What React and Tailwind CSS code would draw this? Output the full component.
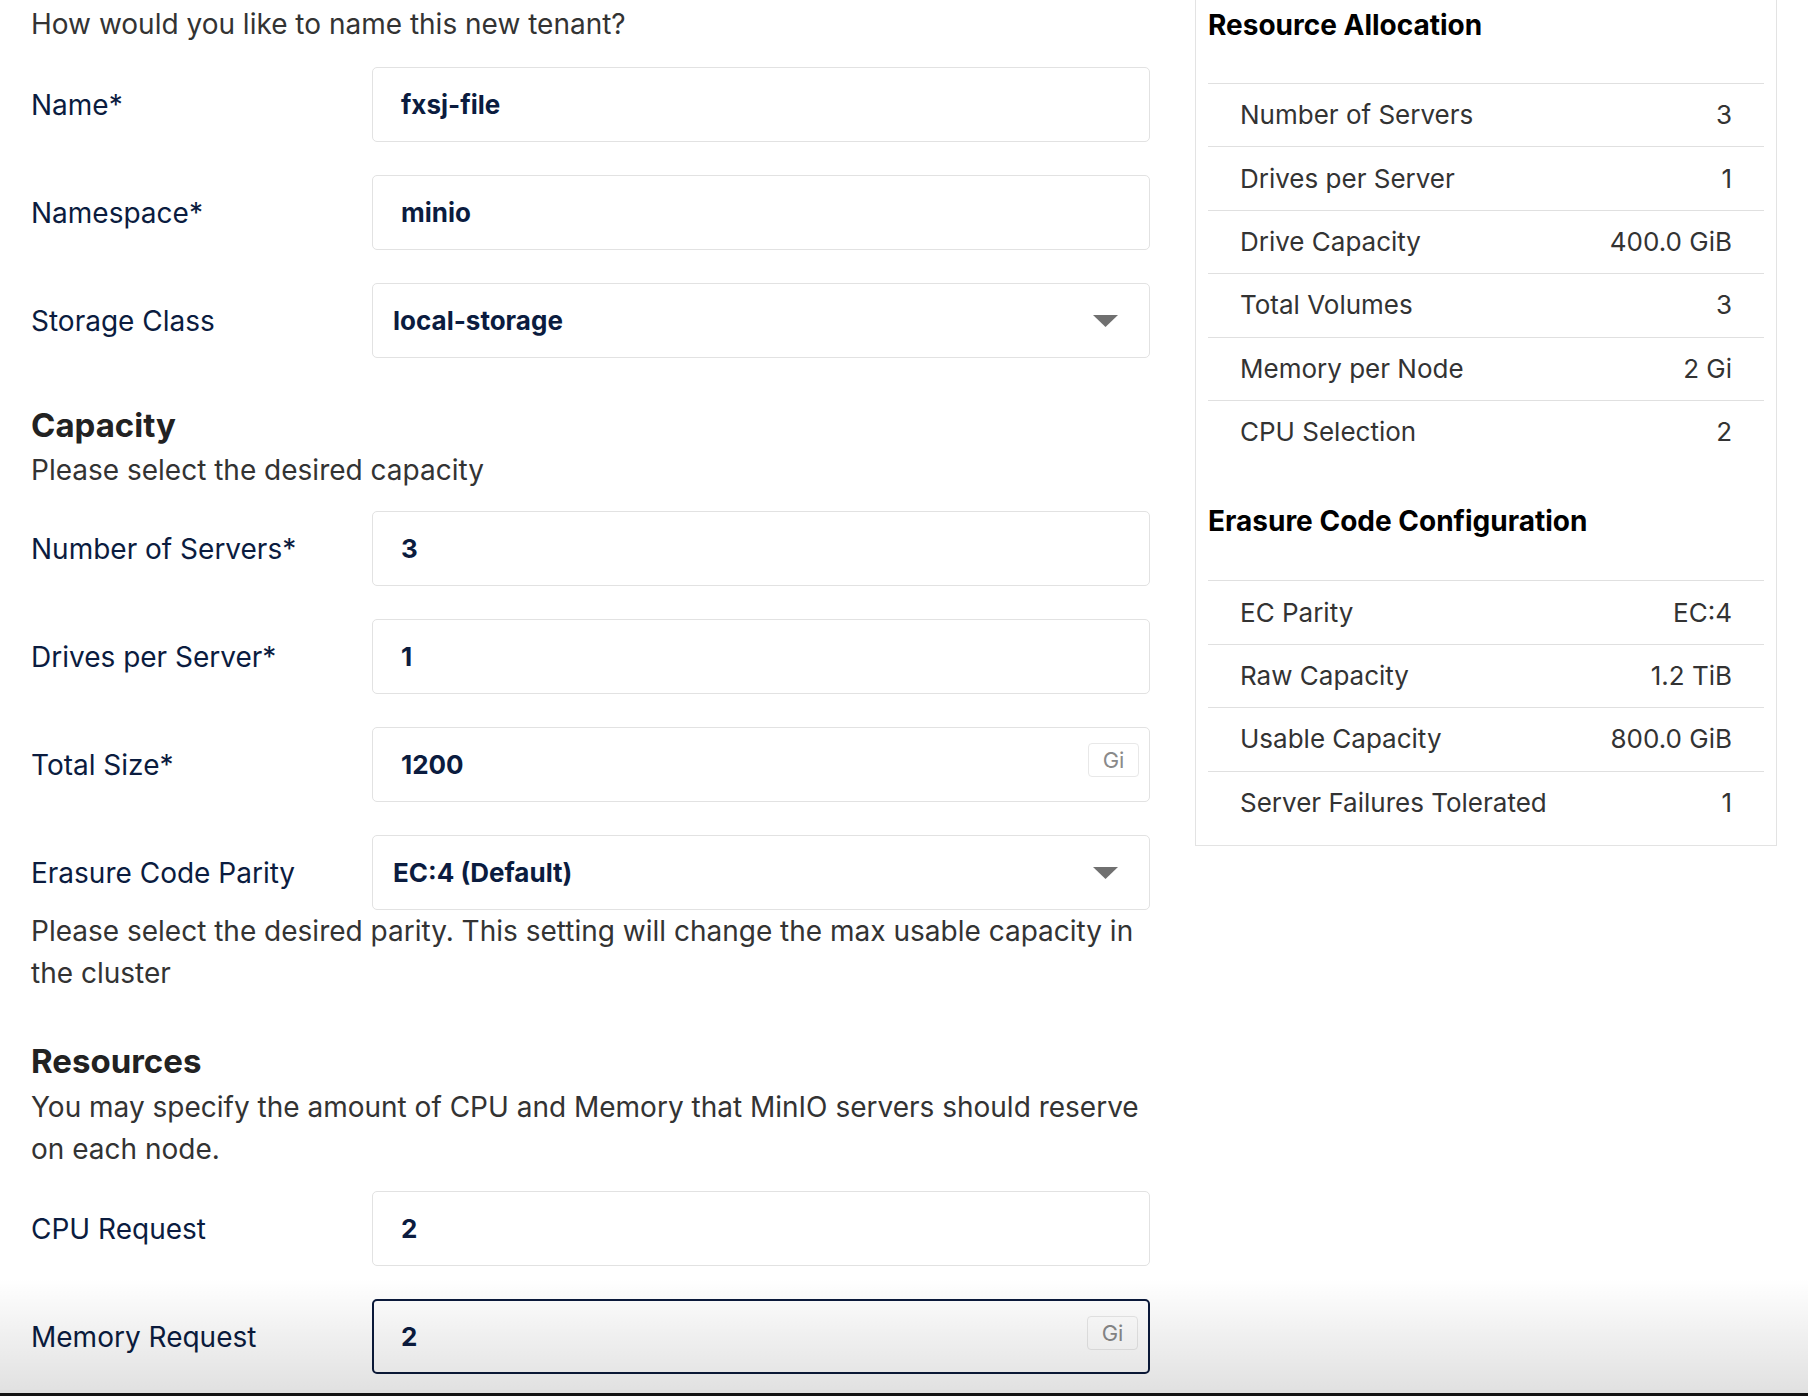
import React from "react";

function GiBadge() {
  return (
    <div className="absolute right-[10px] top-[15px] flex h-[34px] w-[51px] items-center justify-center rounded-[4px] border border-[#e8e8e8] bg-white text-[22px] text-[#8a8a8a]">
      Gi
    </div>
  );
}

function Caret() {
  return (
    <svg className="absolute right-[31px] top-1/2 -translate-y-1/2" width="25" height="12" viewBox="0 0 25 12">
      <polygon points="0,0 25,0 12.5,12" fill="#707070" />
    </svg>
  );
}

function Row({ label, value, select, badge, focused }) {
  return (
    <div className="flex items-center">
      <div className="w-[341px] shrink-0 text-[28px] text-[#0b1c3f]">{label}</div>
      <div
        className={
          focused
            ? "relative flex h-[75px] w-[778px] items-center rounded-[5px] border-2 border-[#0b1a3b] pl-[27px]"
            : "relative flex h-[75px] w-[778px] items-center rounded-[5px] border border-[#e2e2e2] " +
              (select ? "pl-[20px]" : "pl-[28px]")
        }
      >
        <span className="text-[26px] font-bold text-[#0b1c3f]">{value}</span>
        {select && <Caret />}
        {badge && <GiBadge />}
      </div>
    </div>
  );
}

function TRow({ label, value }) {
  return (
    <div className="flex h-[63.4px] items-center justify-between border-t border-[#e0e0e0] pl-[32px] pr-[32px] text-[26px] text-[#333]">
      <span>{label}</span>
      <span>{value}</span>
    </div>
  );
}

export default function App() {
  return (
    <div className="relative h-[1396px] w-[1808px] overflow-hidden bg-white font-[Inter,sans-serif] text-[28px] leading-[42px]">
      <div className="flex">
        <div className="w-[1150px] shrink-0 pl-[31px] pt-[5px]">
          <div className="leading-[39px] text-[#333]">How would you like to name this new tenant?</div>
          <div className="mt-[23px] flex flex-col gap-[33px]">
            <Row label="Name*" value="fxsj-file" />
            <Row label="Namespace*" value="minio" />
            <Row label="Storage Class" value="local-storage" select />
          </div>

          <div className="mt-[47px] text-[33px] font-bold leading-[40px] text-[#222]">Capacity</div>
          <div className="mt-[4px] text-[#333]">Please select the desired capacity</div>
          <div className="mt-[20px] flex flex-col gap-[33px]">
            <Row label="Number of Servers*" value="3" />
            <Row label="Drives per Server*" value="1" />
            <Row label="Total Size*" value="1200" badge />
            <Row label="Erasure Code Parity" value="EC:4 (Default)" select />
          </div>
          <div className="w-[1119px] text-[#333]">
            Please select the desired parity. This setting will change the max usable capacity in the cluster
          </div>

          <div className="mt-[47px] text-[33px] font-bold leading-[40px] text-[#222]">Resources</div>
          <div className="mt-[5px] w-[1119px] text-[#333]">
            You may specify the amount of CPU and Memory that MinIO servers should reserve on each node.
          </div>
          <div className="mt-[21px] flex flex-col gap-[33px]">
            <Row label="CPU Request" value="2" />
            <Row label="Memory Request" value="2" badge focused />
          </div>
        </div>

        <div className="ml-[45px] w-[582px] self-start border-x border-b border-[#e3e3e3] px-[12px] pb-[11px] pt-[8px]">
          <div className="text-[28px] font-bold leading-[34px] text-black">Resource Allocation</div>
          <div className="mt-[41px]">
            <TRow label="Number of Servers" value="3" />
            <TRow label="Drives per Server" value="1" />
            <TRow label="Drive Capacity" value="400.0 GiB" />
            <TRow label="Total Volumes" value="3" />
            <TRow label="Memory per Node" value="2 Gi" />
            <TRow label="CPU Selection" value="2" />
          </div>
          <div className="mt-[41px] text-[28px] font-bold leading-[34px] text-black">Erasure Code Configuration</div>
          <div className="mt-[42px]">
            <TRow label="EC Parity" value="EC:4" />
            <TRow label="Raw Capacity" value="1.2 TiB" />
            <TRow label="Usable Capacity" value="800.0 GiB" />
            <TRow label="Server Failures Tolerated" value="1" />
          </div>
        </div>
      </div>

      <div className="pointer-events-none absolute bottom-[3px] left-0 right-0 h-[115px] bg-linear-to-b from-transparent to-black/[0.12]" />
      <div className="absolute bottom-0 left-0 right-0 h-[3px] bg-[#141414]" />
    </div>
  );
}
